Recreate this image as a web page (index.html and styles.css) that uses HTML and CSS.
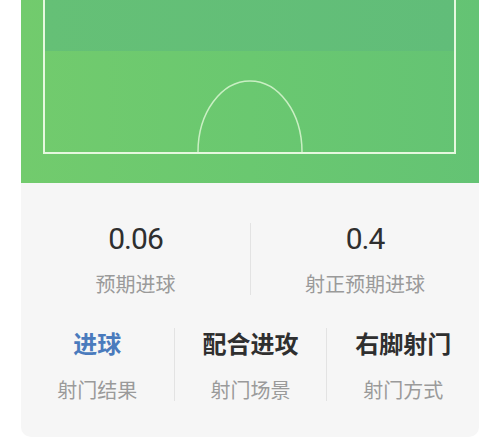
FILE: index.html
```html
<!DOCTYPE html>
<html lang="zh-CN">
<head>
    <meta charset="UTF-8">
    <meta name="viewport" content="width=device-width, initial-scale=1.0">
    <title>射门详情</title>
    <link rel="stylesheet" href="styles.css">
</head>
<body>
    <div class="card">
        <div class="pitch">
            <div class="box">
                <div class="band"></div>
                <div class="area">
                    <svg class="arc" width="108" height="73" viewBox="0 0 108 73">
                        <path d="M2 73 A52 71 0 0 1 106 73" fill="none" stroke="#c9efc3" stroke-width="1.5"/>
                    </svg>
                </div>
            </div>
        </div>

        <div class="stats">
            <div class="row two">
                <div class="cell">
                    <div class="num">0.06</div>
                    <div class="label">预期进球</div>
                </div>
                <div class="cell">
                    <div class="num">0.4</div>
                    <div class="label">射正预期进球</div>
                </div>
            </div>
            <div class="row three">
                <div class="cell">
                    <div class="value blue">进球</div>
                    <div class="label">射门结果</div>
                </div>
                <div class="cell">
                    <div class="value">配合进攻</div>
                    <div class="label">射门场景</div>
                </div>
                <div class="cell">
                    <div class="value">右脚射门</div>
                    <div class="label">射门方式</div>
                </div>
            </div>
        </div>
    </div>
</body>
</html>
```

FILE: styles.css
```css
body {
    margin: 0;
    background-color: #fff;
    font-family: "Noto Sans CJK SC", "Noto Sans", sans-serif;
    color: #333;
}
.card {
    margin: 0 21px;
    border-radius: 0 0 10px 10px;
    overflow: hidden;
    background-color: #f6f6f6;
}
.pitch {
    height: 183px;
    box-sizing: border-box;
    padding: 0 23px 31px 22px;
    background: linear-gradient(90deg, #72cb6d, #6ac870 50%, #64c374);
}
.box {
    height: 100%;
    border: 2px solid #e6f8df;
    border-top: none;
    display: flex;
    flex-direction: column;
}
.band {
    height: 51px;
    background: linear-gradient(90deg, #65c076, #61bd79);
}
.area {
    flex: 1;
    display: flex;
    justify-content: center;
    align-items: flex-end;
}
.arc {
    display: block;
}
.stats {
    padding: 40px 0 36px;
}
.row {
    display: grid;
}
.row.two {
    grid-template-columns: 1fr 1fr;
}
.row.three {
    grid-template-columns: 1fr 1fr 1fr;
    margin-top: 33px;
}
.cell {
    display: flex;
    flex-direction: column;
    align-items: center;
}
.cell + .cell {
    border-left: 1px solid #e3e3e3;
}
.num {
    font-family: Roboto, "Noto Sans", sans-serif;
    font-size: 30px;
    line-height: 32px;
    letter-spacing: -1px;
    color: #2f2f2f;
}
.value {
    font-size: 24px;
    line-height: 30px;
    font-weight: bold;
    color: #2f2f2f;
}
.value.blue {
    color: #4a7bbd;
}
.label {
    font-size: 20px;
    line-height: 22px;
    color: #9a9a9a;
}
.num + .label {
    margin-top: 18px;
}
.value + .label {
    margin-top: 21px;
}
```
